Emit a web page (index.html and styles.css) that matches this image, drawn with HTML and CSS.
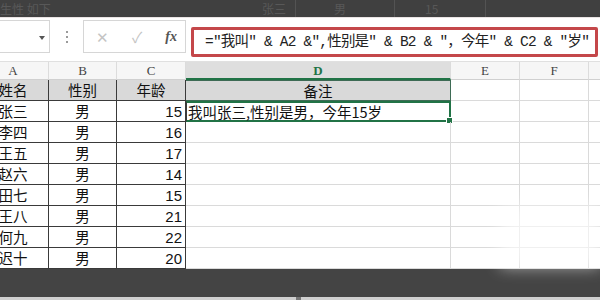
FILE: index.html
```html
<!DOCTYPE html>
<html>
<head>
    <link rel="stylesheet" href="styles.css">
</head>

<body>
    <div class="topbar">
        <span class="ghost ghost-left">生性 如下</span>
        <span class="ghost ghost-name">张三</span>
        <span class="ghost-line"></span>
        <span class="ghost ghost-sex">男</span>
        <span class="ghost-line"></span>
        <span class="ghost ghost-age">15</span>
        <span class="ghost-line"></span>
    </div>

    <div class="formula-bar">
        <div class="name-box">
            <span class="arrow"></span>
        </div>
        <div class="dots"><i></i><i></i><i></i></div>
        <div class="fx-buttons">
            <span class="btn-x">✕</span>
            <span class="btn-ok">✓</span>
            <span class="btn-fx">fx</span>
        </div>
        <div class="formula-input">="我叫″ &amp; A2 &amp;″,性别是″ &amp; B2 &amp; ″，今年″ &amp; C2 &amp; ″岁″</div>
    </div>

    <div class="sheet">
        <div class="col-head">A</div>
        <div class="col-head">B</div>
        <div class="col-head">C</div>
        <div class="col-head active">D</div>
        <div class="col-head">E</div>
        <div class="col-head">F</div>
        <div class="col-head last"></div>

        <div class="cell tbl head">姓名</div>
        <div class="cell tbl head">性别</div>
        <div class="cell tbl head">年龄</div>
        <div class="cell head note-head">备注</div>
        <div class="cell"></div>
        <div class="cell"></div>
        <div class="cell last"></div>
    </div>

    <div class="bottombar">
        <span class="handle"></span>
    </div>
    <div class="glare"></div>

    <script>
        var people = [
            ['张三', '男', 15],
            ['李四', '男', 16],
            ['王五', '男', 17],
            ['赵六', '男', 14],
            ['田七', '男', 15],
            ['王八', '男', 21],
            ['何九', '男', 22],
            ['迟十', '男', 20]
        ];
        var sheet = document.querySelector('.sheet');
        people.forEach(function (p, i) {
            var html = '<div class="cell tbl">' + p[0] + '</div>' +
                '<div class="cell tbl">' + p[1] + '</div>' +
                '<div class="cell tbl num">' + p[2] + '</div>';
            if (i == 0) {
                html += '<div class="cell note selected">我叫' + p[0] + ',性别是' + p[1] + '，今年' + p[2] + '岁<span class="fill-handle"></span></div>';
            } else {
                html += '<div class="cell note"></div>';
            }
            html += '<div class="cell"></div><div class="cell"></div><div class="cell last"></div>';
            sheet.insertAdjacentHTML('beforeend', html);
        });
    </script>
</body>
</html>
```

FILE: styles.css
```css
body {
    margin: 0;
    width: 600px;
    height: 300px;
    overflow: hidden;
    background: #fff;
    font-family: "Noto Sans CJK SC", sans-serif;
    position: relative;
}

.topbar {
    height: 17px;
    background: #404040;
    display: flex;
    align-items: center;
    overflow: hidden;
    border-bottom: 1px solid #e9e3e3;
}

.ghost {
    color: #585858;
    font-size: 12px;
    line-height: 17px;
}

.ghost-left {
    width: 262px;
}

.ghost-name {
    width: 33px;
}

.ghost-sex {
    margin-left: 38px;
    width: 60px;
}

.ghost-age {
    margin-left: 30px;
    width: 60px;
}

.ghost-line {
    width: 1px;
    height: 17px;
    background: #535353;
}

.formula-bar {
    height: 44px;
    background: #fff;
    display: flex;
    align-items: flex-start;
    box-sizing: border-box;
    border-bottom: 1px solid #e0e0e0;
}

.name-box {
    width: 50px;
    height: 33px;
    margin-top: 2px;
    border: 1px solid #d6d6d6;
    border-left: none;
    box-sizing: border-box;
    display: flex;
    align-items: center;
    justify-content: flex-end;
    padding-right: 4px;
}

.arrow {
    width: 0;
    height: 0;
    border-left: 3px solid transparent;
    border-right: 3px solid transparent;
    border-top: 4px solid #555;
    margin-top: 2px;
}

.dots {
    width: 33px;
    height: 33px;
    margin-top: 2px;
    display: flex;
    flex-direction: column;
    align-items: center;
    justify-content: center;
    gap: 3px;
}

.dots i {
    width: 2px;
    height: 2px;
    background: #9a9a9a;
}

.fx-buttons {
    width: 103px;
    height: 33px;
    margin-top: 2px;
    border: 1px solid #d6d6d6;
    box-sizing: border-box;
    display: flex;
    align-items: center;
    padding: 0 8px 0 12px;
    justify-content: space-between;
}

.btn-x,
.btn-ok {
    color: #c4c4c4;
    font-size: 15px;
}

.btn-fx {
    color: #555;
    font-family: "Liberation Serif", serif;
    font-style: italic;
    font-size: 14px;
    font-weight: bold;
}

.formula-input {
    width: 407px;
    height: 30px;
    margin: 9px 0 0 5px;
    border: 3px solid #c4474a;
    border-radius: 2px;
    box-sizing: border-box;
    font-family: "Liberation Mono", "Noto Sans CJK SC", monospace;
    font-size: 14.5px;
    letter-spacing: -0.8px;
    line-height: 24px;
    padding-left: 11px;
    color: #222;
    white-space: nowrap;
    overflow: hidden;
}

.sheet {
    margin-left: -22px;
    display: grid;
    grid-template-columns: 71px 68px 69px 265px 69px 69px 33px;
    grid-template-rows: 18px repeat(9, 21px);
}

.col-head {
    background: #f6f6f6;
    border-right: 1px solid #dcdcdc;
    border-bottom: 1px solid #d0d0d0;
    box-sizing: border-box;
    font-family: "Liberation Serif", serif;
    font-size: 13px;
    line-height: 18px;
    color: #444;
    text-align: center;
}

.col-head.active {
    background: #dedede;
    color: #217346;
    font-weight: bold;
    border-bottom: 2px solid #217346;
}

.cell {
    border-right: 1px solid #dadada;
    border-bottom: 1px solid #dadada;
    box-sizing: border-box;
    font-size: 14.5px;
    line-height: 20px;
    color: #111;
    text-align: center;
    white-space: nowrap;
}

.last {
    border-right: none;
}

.cell.tbl {
    border-right: 1px solid #3a3a3a;
    border-bottom: 1px solid #3a3a3a;
}

.cell.head {
    background: #d9d9d9;
}

.cell.num {
    text-align: right;
    padding-right: 3px;
    font-family: "Liberation Sans", sans-serif;
    font-size: 15px;
    line-height: 22px;
}

.note-head {
    border: 1px solid #3e6b55;
    border-left: none;
}

.cell.note {
    text-align: left;
    position: relative;
    padding-left: 2px;
}

.cell.selected {
    border: 2px solid #217346;
    border-left: 1px solid #3a3a3a;
    line-height: 17px;
    padding-left: 1px;
}

.fill-handle {
    position: absolute;
    right: -4px;
    bottom: -4px;
    width: 5px;
    height: 5px;
    background: #217346;
    border: 1px solid #fff;
}

.bottombar {
    height: 31px;
    background: #444;
    border-bottom: 3px solid #cfcfcf;
    box-sizing: border-box;
    position: relative;
}

.handle {
    position: absolute;
    left: 296px;
    bottom: -3px;
    width: 5px;
    height: 3px;
    background: #777;
}

.glare {
    position: absolute;
    left: 500px;
    top: 205px;
    width: 100px;
    height: 62px;
    background: rgba(255, 255, 255, 0.6);
    filter: blur(8px);
}
```
